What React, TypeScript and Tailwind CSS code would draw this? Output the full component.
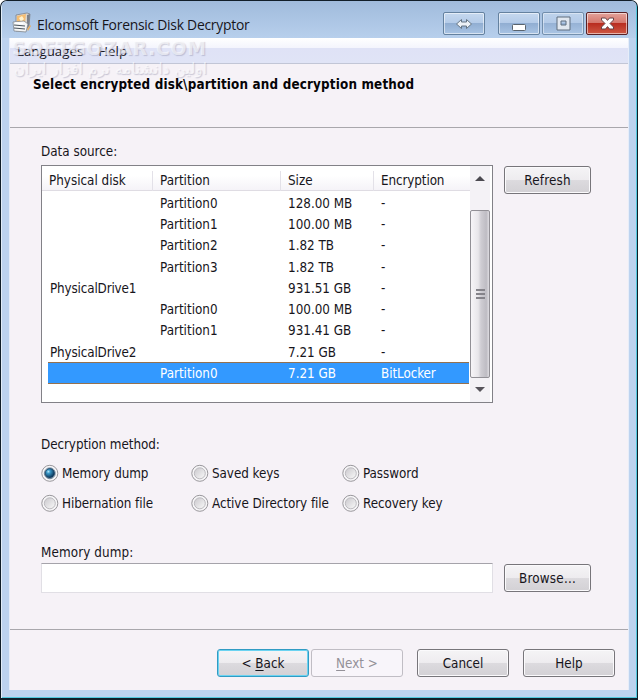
import React from "react";

const button =
  "flex items-center justify-center h-[28px] rounded-[3px] border border-[#77757a] bg-[linear-gradient(#f5f4f6_0%,#eeecef_48%,#dcdade_52%,#d3d1d5_100%)] shadow-[inset_0_0_0_1px_#fbfafc] pt-[2px]";
const caption =
  "flex items-center justify-center h-[23px] shrink-0 rounded-[2px] border shadow-[inset_0_0_0_1px_rgba(255,255,255,0.55)]";
const blueCaption =
  "border-[#64819f] bg-[linear-gradient(#c5d8ef_0%,#b4cbe8_48%,#91aed2_50%,#a9c4e4_100%)]";

const rows: string[][] = [
  ["", "Partition0", "128.00 MB", "-"],
  ["", "Partition1", "100.00 MB", "-"],
  ["", "Partition2", "1.82 TB", "-"],
  ["", "Partition3", "1.82 TB", "-"],
  ["PhysicalDrive1", "", "931.51 GB", "-"],
  ["", "Partition0", "100.00 MB", "-"],
  ["", "Partition1", "931.41 GB", "-"],
  ["PhysicalDrive2", "", "7.21 GB", "-"],
  ["", "Partition0", "7.21 GB", "BitLocker"],
];

function Radio({ label, on }: { label: string; on?: boolean }) {
  return (
    <label className="flex h-[30px] items-center gap-[3px] whitespace-nowrap">
      <svg width="18" height="18" viewBox="0 0 18 18" className="shrink-0">
        <circle cx="8.8" cy="9.3" r="8" fill="#f7f6f8" stroke="#98969b" />
        <circle cx="8.8" cy="9.3" r="5.5" fill="url(#ring)" stroke={on ? "#8496a8" : "#bcbabf"} />
        {on && <circle cx="8.8" cy="9.3" r="4.7" fill="url(#dot)" stroke="#173e60" strokeWidth="0.8" />}
      </svg>
      <span className="pt-[2px] tracking-[-0.06px]">{label}</span>
    </label>
  );
}

function AppIcon() {
  return (
    <svg width="20" height="22" viewBox="0 0 20 22">
      <path d="M4 3l11-2 3 1-1 12-4 5H4z" fill="#d9d5cf" stroke="#77797e" strokeWidth=".7" />
      <path d="M5 4l9-2-1 8-8 1z" fill="#f5bd72" />
      <path d="M7 6l3-2 2 3-3 3z" fill="#fff2ce" />
      <path d="M15 3l3-1-1 12-2 3z" fill="#7b818b" />
      <path d="M1 10l11-1 4 3-2 8-12-1z" fill="#f4f5f5" stroke="#777d84" strokeWidth=".7" />
      <path d="M2 13l11 1M2 16l11 1" stroke="#4c555e" strokeWidth="1.2" />
      <path d="M3 11l8 .5" stroke="#fff" strokeWidth="1.5" />
      <path d="M15 17l3-4 1 1-3 5z" fill="#e4ad65" />
    </svg>
  );
}

function Cells({ values }: { values: string[] }) {
  return (
    <>
      <span className="w-[110px] pl-[2px] tracking-[-0.15px]">{values[0]}</span>
      <span className="w-[128px] pl-[2px]">{values[1]}</span>
      <span className="w-[93px] pl-[2px]">{values[2]}</span>
      <span className="pl-[2px] tracking-[-0.08px]">{values[3]}</span>
    </>
  );
}

export default function App() {
  return (
    <div className="relative flex h-[700px] w-[638px] flex-col overflow-hidden rounded-t-[7px] border border-[#111e29] border-b-[2px] bg-[#bdd3ef] px-[8px] pb-[8px] font-['DejaVu_Sans_Condensed','DejaVu_Sans',sans-serif] text-[13.33px] leading-[20px] text-[#17151b] shadow-[inset_1px_1px_0_#e2edf8,inset_-1px_-1px_0_#54c9de] [font-stretch:condensed]">
      <svg width="0" height="0" className="absolute">
        <defs>
          <linearGradient id="ring" x1="0" y1="0" x2="1" y2="1"><stop stopColor="#c9c7cc" /><stop offset="1" stopColor="#fafafa" /></linearGradient>
          <radialGradient id="dot" cx=".35" cy=".32" r=".65"><stop stopColor="#b5e7f8" /><stop offset=".3" stopColor="#3a98c8" /><stop offset="1" stopColor="#0b365a" /></radialGradient>
        </defs>
      </svg>
      <header className="-mx-[7px] flex h-[37px] shrink-0 items-start bg-[linear-gradient(#a0bbdc,#b7cfec)] pl-[10px] pr-[2px] pt-[11px]">
        <AppIcon />
        <h1 className="ml-[5px] w-[406px] shrink-0 whitespace-nowrap pt-[3px] font-['Open_Sans',sans-serif] text-[13.9px] leading-[20px] tracking-[-0.26px] [font-stretch:normal]">Elcomsoft Forensic Disk Decryptor</h1>
        <div className="flex gap-[2px]">
          <span className={`${caption} ${blueCaption} mr-[11px] w-[42px]`}>
            <svg width="18" height="12" viewBox="0 0 18 12"><path d="M1.500 6l5-4.500v2.500h5V1.500l5 4.500-5 4.500V8h-5v2.500z" fill="#eef2f7" stroke="#667583" /></svg>
          </span>
          <span className={`${caption} ${blueCaption} w-[42px]`}>
            <svg width="14" height="14"><rect x=".5" y="7.500" width="13" height="6" rx="1" fill="#fff" stroke="#59636d" /></svg>
          </span>
          <span className={`${caption} ${blueCaption} w-[42px] opacity-80`}>
            <svg width="15" height="15"><path fillRule="evenodd" d="M1 1h13v13H1zM5 5h5v4H5z" fill="#eef0f3" stroke="#4c5864" /></svg>
          </span>
          <span className={`${caption} w-[42px] border-[#592126] bg-[linear-gradient(#e3a29a_0%,#d5776d_47%,#b92d20_50%,#ce5945_100%)]`}>
            <svg width="15" height="13" viewBox="0 0 15 13"><path d="M1.500 1h4l2 2.400L9.500 1h4v2L10 6.500l3.500 3.500v2h-4l-2-2.400L5.500 12h-4v-2L5 6.500 1.500 3z" fill="#fff" stroke="#674448" /></svg>
          </span>
        </div>
      </header>
      <main className="flex min-h-0 flex-1 flex-col border-x border-[#e6edf9] bg-[#f6f2f7]">
        <nav className="flex h-[26px] shrink-0 items-center gap-[15px] border-b border-[#c2c6d6] bg-[linear-gradient(#fff_0%,#f4f5fd_38%,#dfe2f6_42%,#e0e4f6_100%)] pl-[7px] pt-[1px] font-['Open_Sans',sans-serif] text-[13.3px] [font-stretch:normal]">
          <span>Languages</span><span>Help</span>
        </nav>
        <div className="flex h-[64px] shrink-0 items-start border-b border-[#a9a7ac] pl-[23px] pt-[11px]">
          <h2 className="whitespace-nowrap text-[13.33px] font-bold tracking-[0.17px] text-[#050407]">Select encrypted disk\partition and decryption method</h2>
        </div>
        <div className="flex h-[502px] shrink-0 flex-col border-b border-[#a9a7ac] pl-[31px] pt-[14px]">
          <div className="h-[23px]">Data source:</div>
          <div className="flex gap-[11px]">
            <div className="flex h-[238px] w-[452px] border border-[#828187] bg-white">
              <div className="w-[428px]">
                <div className="flex h-[25px] items-center border-b border-[#dfdce3] bg-[linear-gradient(#fff_40%,#f5f3f8)] pl-[7px] pt-[5px]">
                  <span className="w-[103px]">Physical disk</span>
                  <span className="w-[128px] border-l border-[#e3e1e8] pl-[7px]">Partition</span>
                  <span className="w-[93px] border-l border-[#e3e1e8] pl-[7px]">Size</span>
                  <span className="border-l border-[#e3e1e8] pl-[7px] tracking-[-0.1px]">Encryption</span>
                </div>
                <div className="flex flex-col pl-[6px] pt-[1px]">
                  {rows.map((row, i) => (
                    <div key={i} className={`flex h-[21.3px] items-center whitespace-nowrap ${i === 8 ? "w-[421px] border-y border-[#94714f] bg-[#3399ff] pt-[1px] text-white" : "pt-[2px]"}`}>
                      <Cells values={row} />
                    </div>
                  ))}
                </div>
              </div>
              <div className="flex w-[20px] flex-col items-center bg-[#f4f2f6]">
                <svg width="20" height="44"><path d="M5 15l5-5 5 5z" fill="#4b4950" /></svg>
                <div className="flex h-[168px] w-[20px] flex-col items-center justify-center gap-[2px] rounded-[2px] border border-[#929096] bg-[linear-gradient(90deg,#f7f5f8_0%,#e8e6ea_40%,#cfcdd3_55%,#bebcc3_85%,#dedce1_100%)]">
                  <i className="h-[2px] w-[9px] bg-[#85838a]" />
                  <i className="h-[2px] w-[9px] bg-[#85838a]" />
                  <i className="h-[2px] w-[9px] bg-[#85838a]" />
                </div>
                <svg width="20" height="24"><path d="M5 9h10l-5 5z" fill="#57545b" /></svg>
              </div>
            </div>
            <button className={`${button} mt-[1px] w-[87px] tracking-[0.2px]`}>Refresh</button>
          </div>
          <div className="h-[51px] pt-[32px] tracking-[-0.07px]">Decryption method:</div>
          <div className="grid grid-cols-[150px_151px_110px] pt-[4px]">
            <Radio label="Memory dump" on /><Radio label="Saved keys" /><Radio label="Password" />
            <Radio label="Hibernation file" /><Radio label="Active Directory file" /><Radio label="Recovery key" />
          </div>
          <div className="h-[45px] pt-[25px] tracking-[0.1px]">Memory dump:</div>
          <div className="flex gap-[11px]">
            <input className="h-[30px] w-[452px] border border-[#e1dfe5] border-t-[#a5a3aa] bg-white outline-none" />
            <button className={`${button} mt-[1px] w-[87px] tracking-[0.2px]`}>Browse...</button>
          </div>
        </div>
        <footer className="flex pl-[207px] pt-[19px]">
          <button className={`${button} w-[92px] border-[#319bc3]! shadow-[inset_0_0_0_1px_#6bd3f1]!`}><span>&lt; <u className="underline-offset-2">B</u>ack</span></button>
          <button className="ml-[2px] h-[28px] w-[92px] rounded-[3px] border border-[#c0bdc4] bg-[#f8f5fa] pt-[2px] text-[#949198]">
            <u className="underline-offset-2">N</u>ext &gt;
          </button>
          <button className={`${button} ml-[14px] w-[92px]`}>Cancel</button>
          <button className={`${button} ml-[14px] w-[92px]`}>Help</button>
        </footer>
      </main>
      <div className="pointer-events-none absolute left-[11px] top-[37px] flex w-[195px] flex-col text-white/60 [text-shadow:1px_1px_1px_#77779855] [font-stretch:normal]">
        <span className="whitespace-nowrap font-['DejaVu_Sans',sans-serif] text-[19px] font-bold leading-[21px] tracking-[0.55px]">SOFTGOZAR.COM</span>
        <span dir="rtl" className="whitespace-nowrap font-['DejaVu_Sans',sans-serif] text-[15.3px] leading-[20px]">اولین دانشنامه نرم افزار ایران</span>
      </div>
    </div>
  );
}
